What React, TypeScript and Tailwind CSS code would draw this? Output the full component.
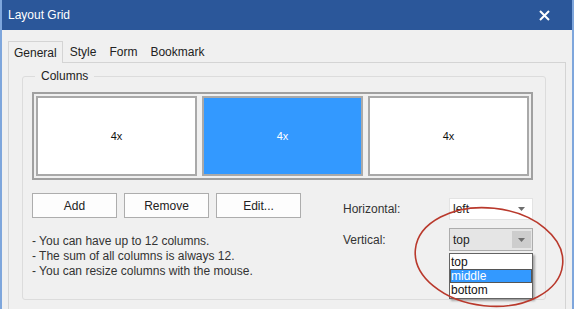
import React from 'react';

const font = { fontFamily: '"Liberation Sans", Arial, sans-serif' };

const Arrow: React.FC = () => (
  <svg width="7" height="4" viewBox="0 0 7 4">
    <path d="M0 0 L7 0 L3.5 4 Z" fill="#6d6d6d" />
  </svg>
);

const Cell: React.FC<{ active?: boolean }> = ({ active }) => (
  <div
    className={
      'flex-1 flex items-center justify-center border-2 text-[11px] ' +
      (active ? 'bg-[#3399ff] border-[#a9a9a9] text-white' : 'bg-white border-[#a9a9a9] text-[#111]')
    }
  >
    4x
  </div>
);

const Btn: React.FC<{ label: string }> = ({ label }) => (
  <button className="w-[85px] h-[25px] border border-[#adadad] bg-[#fdfdfd] text-[12px] text-[#222]">{label}</button>
);

export default function App() {
  return (
    <div className="relative w-[576px] h-[309px] overflow-hidden bg-white" style={font}>
      <div className="w-[574px] h-full bg-[#f0f0f0] border-l-2 border-r-2 border-[#7ea6dc] flex flex-col">
        {/* title bar */}
        <div className="h-[30px] bg-[#2b579a] flex items-center justify-between pl-[6px] pr-[22px] shrink-0">
          <span className="text-white text-[12px]">Layout Grid</span>
          <svg width="11" height="11" viewBox="0 0 11 11">
            <path d="M1 1 L10 10 M10 1 L1 10" stroke="white" strokeWidth="2" />
          </svg>
        </div>

        {/* tabs */}
        <div className="flex items-end pl-[6px] pt-[10px] text-[12px] text-[#222]">
          <div className="h-[22px] px-[5px] border border-b-0 border-[#d4d4d4] bg-[#f0f0f0] flex items-center relative top-px z-10">
            General
          </div>
          <div className="h-[20px] flex items-center gap-[13px] pl-[7px]">
            <span>Style</span>
            <span>Form</span>
            <span>Bookmark</span>
          </div>
        </div>

        {/* tab page */}
        <div className="flex-1 ml-[6px] mr-[6px] border border-b-0 border-[#d4d4d4] pl-[13px] pr-[19px] pt-[6px]">
          <fieldset className="border border-[#dcdcdc] rounded-[3px] pl-[9px] pr-[12px] pb-[20px]">
            <legend className="ml-[3px] px-[6px] text-[12px] text-[#222] leading-[14px]">Columns</legend>

            <div className="mt-[9px] h-[88px] border-2 border-[#a0a0a0] p-[2px] flex gap-[5px]">
              <Cell />
              <Cell active />
              <Cell />
            </div>

            <div className="flex items-start mt-[13px]">
              <div className="flex flex-col">
                <div className="flex gap-[7px]">
                  <Btn label="Add" />
                  <Btn label="Remove" />
                  <Btn label="Edit..." />
                </div>
                <div className="mt-[16px] text-[12px] leading-[15px] text-[#333]">
                  <div>- You can have up to 12 columns.</div>
                  <div>- The sum of all columns is always 12.</div>
                  <div>- You can resize columns with the mouse.</div>
                </div>
              </div>

              <div className="ml-auto w-[190px] grid grid-cols-[106px_84px] content-start gap-y-[8px] mt-[5px] text-[12px] text-[#333] items-center">
                <span>Horizontal:</span>
                <div className="h-[22px] bg-white border border-[#e3e3e3] flex items-center justify-between pl-[3px] pr-[7px]">
                  <span className="text-[#222]">left</span>
                  <Arrow />
                </div>
                <span>Vertical:</span>
                <div className="relative h-[23px] bg-[#e5e5e5] border border-[#acacac] flex items-center justify-between pl-[3px] pr-[1px]">
                  <span className="text-[#222]">top</span>
                  <div className="w-[19px] h-[17px] bg-[#cdcdcd] flex items-center justify-center">
                    <Arrow />
                  </div>
                  {/* open list */}
                  <div className="absolute left-[-1px] top-[24px] w-[84px] bg-white border border-[#646464] shadow-[2px_2px_2px_rgba(0,0,0,0.3)] text-[12px] leading-[14px] text-[#111] py-[1px] z-20">
                    <div className="pl-[1px]">top</div>
                    <div className="pl-[1px] bg-[#3399ff] text-white outline outline-1 outline-[#555] -outline-offset-1">middle</div>
                    <div className="pl-[1px]">bottom</div>
                  </div>
                </div>
              </div>
            </div>
          </fieldset>
        </div>
      </div>

      {/* red highlight ellipse */}
      <svg className="absolute left-0 top-0 pointer-events-none z-30" width="576" height="309">
        <ellipse cx="489" cy="257" rx="74" ry="49" transform="rotate(6 489 257)" fill="none" stroke="#b9392c" strokeWidth="1.6" />
      </svg>
    </div>
  );
}
